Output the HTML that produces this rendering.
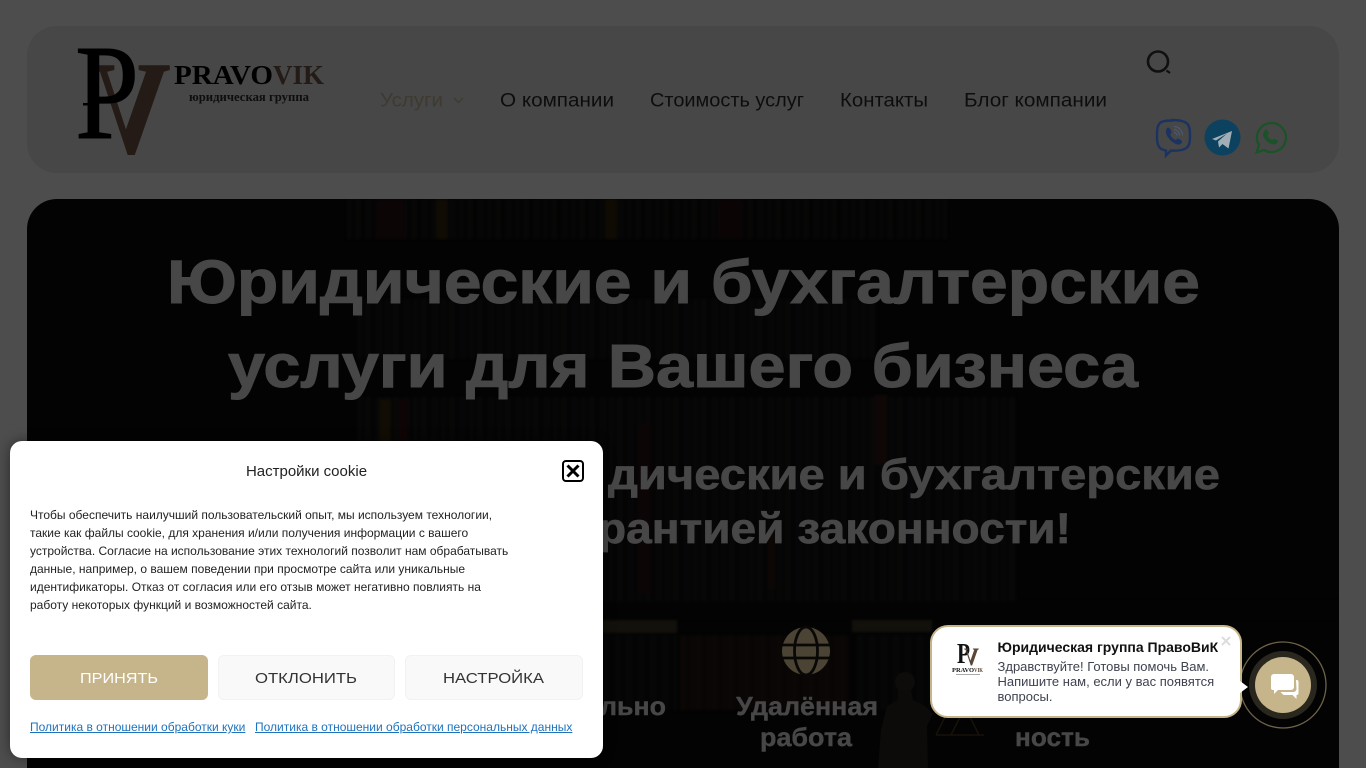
<!DOCTYPE html>
<html lang="ru"><head><meta charset="utf-8"><title>ПравоВиК</title>
<style>
html,body{margin:0;padding:0;width:1366px;height:768px;overflow:hidden;background:#4d4d4d}
body{position:relative;font-family:"Liberation Sans",sans-serif}
.abs{position:absolute}
#hdr{left:27px;top:26px;width:1312px;height:147px;border-radius:30px;background:#474747}
#hero{left:27px;top:199px;width:1312px;height:600px;border-radius:30px;background:#030303;overflow:hidden}
#hero div{position:absolute}
.spines{background:repeating-linear-gradient(90deg,#0b0b0c 0 5px,#050505 5px 8px,#0e0c0b 8px 14px,#040404 14px 18px,#0a0a0d 18px 25px,#060505 25px 28px)}
svg.top{position:absolute;left:0;top:0}
#modal{left:10px;top:441px;width:593px;height:317px;background:#fff;border-radius:12px;box-shadow:0 0 12px rgba(0,0,0,.45)}
#modal .t{position:absolute;left:0;top:20.500px;width:593px;text-align:center;font-size:15px;line-height:20px;color:#222}
#modal p{position:absolute;left:20px;top:65px;margin:0;width:490px;font-size:12px;line-height:18px;color:#222;white-space:nowrap}
.btn{position:absolute;top:214px;height:45px;border-radius:6px;box-sizing:border-box}
#modal a{position:absolute;top:278px;font-size:12px;line-height:16px;color:#1e73be;text-decoration:underline;white-space:nowrap}
#chat{left:930px;top:625px;width:312px;height:93px;box-sizing:border-box;background:#fff;border:2.500px solid #c6b58a;border-radius:18px}
#chat b{position:absolute;left:65.500px;top:11.500px;font-size:14px;line-height:16px;color:#111;white-space:nowrap}
#chat span{position:absolute;left:65.500px;top:31.500px;font-size:13px;line-height:15px;color:#3f4350;white-space:nowrap}
</style></head><body>
<div class="abs" id="hdr"></div>
<div class="abs" id="hero">
 <div style="left:0;top:0;width:1312px;height:600px;opacity:.5;filter:blur(1.2px)">
 <div class="spines" style="left:320px;top:0;width:600px;height:40px"></div>
 <div style="left:409px;top:0;width:12px;height:40px;background:#1f1505"></div>
 <div style="left:578px;top:0;width:12px;height:40px;background:#1d1404"></div>
 <div style="left:348px;top:0;width:30px;height:40px;background:#140808"></div>
 <div style="left:690px;top:0;width:25px;height:40px;background:#120708"></div>
 <div class="spines" style="left:330px;top:100px;width:520px;height:60px"></div>
 <div class="spines" style="left:330px;top:198px;width:660px;height:204px"></div>
 <div style="left:352px;top:200px;width:12px;height:50px;background:#1f1605"></div>
 <div style="left:372px;top:200px;width:8px;height:60px;background:#1c0608"></div>
 <div style="left:848px;top:196px;width:12px;height:70px;background:#1c0a0a"></div>
 <div style="left:740px;top:330px;width:8px;height:60px;background:#170a08"></div>
 <div style="left:610px;top:225px;width:14px;height:170px;background:#140808"></div>
 <div style="left:0;top:402px;width:1312px;height:18px;background:#040404"></div>
 <div style="left:570px;top:421px;width:80px;height:13px;background:#241f14"></div>
 <div style="left:825px;top:421px;width:80px;height:12px;background:#241f14"></div>
 <div style="left:653px;top:436px;width:170px;height:75px;background:repeating-linear-gradient(90deg,#120b07 0 6px,#0c0705 6px 10px,#0f0907 10px 16px)"></div>
 <div style="left:575px;top:436px;width:75px;height:75px;background:repeating-linear-gradient(90deg,#090a0c 0 6px,#050606 6px 12px)"></div>
 <div style="left:830px;top:436px;width:75px;height:75px;background:repeating-linear-gradient(90deg,#090a0c 0 6px,#050606 6px 12px)"></div>
 </div>
</div>
<svg class="top" width="1366" height="768" viewBox="0 0 1366 768" xmlns="http://www.w3.org/2000/svg">
 <!-- statue -->
 <circle cx="905" cy="682" r="10" fill="#0e0c0a"/>
 <path d="M898 690h13l2 10 12 6 8 8-6 12 1 42H878l3-38 6-24 11-6z" fill="#0d0b09"/>
 <path d="M936 735l9-18M960 717l-9 18M970 717l9 18M936 735h48" fill="none" stroke="#171309" stroke-width="1.500"/>
 <!-- logo -->
 <g font-family="'Liberation Serif',serif">
  <text transform="translate(171 153) scale(-1 1)" x="0" y="0" font-size="134" font-weight="bold" textLength="79" lengthAdjust="spacingAndGlyphs" fill="#241b17">V</text>
  <text x="75" y="138" font-size="136" textLength="64" lengthAdjust="spacingAndGlyphs" fill="#000" stroke="#000" stroke-width="1">P</text>
  <rect x="83" y="103" width="14" height="2.500" fill="#000"/>
  <g font-weight="bold">
  <text x="174" y="84" font-size="27" textLength="99" lengthAdjust="spacingAndGlyphs" fill="#000">PRAVO</text>
  <text x="273" y="84" font-size="27" textLength="51" lengthAdjust="spacingAndGlyphs" fill="#241b17">VIK</text>
  <text x="189" y="101" font-size="13" textLength="120" lengthAdjust="spacingAndGlyphs" fill="#0e0e0e">юридическая группа</text>
  </g>
 </g>
 <!-- nav -->
 <g font-size="19" fill="#0d0d0d">
  <text x="380" y="106.500" textLength="63" lengthAdjust="spacingAndGlyphs" fill="#3e3a30">Услуги</text>
  <path d="M454 98l4.500 4.500 4.500-4.500" fill="none" stroke="#3e3a30" stroke-width="1.300"/>
  <text x="500" y="106.500" textLength="114" lengthAdjust="spacingAndGlyphs">О компании</text>
  <text x="650" y="106.500" textLength="154" lengthAdjust="spacingAndGlyphs">Стоимость услуг</text>
  <text x="840" y="106.500" textLength="88" lengthAdjust="spacingAndGlyphs">Контакты</text>
  <text x="964" y="106.500" textLength="143" lengthAdjust="spacingAndGlyphs">Блог компании</text>
 </g>
 <!-- search -->
 <circle cx="1158" cy="61.500" r="10" fill="none" stroke="#101010" stroke-width="2.600"/>
 <path d="M1166.500 70.500l3.500 2.500" stroke="#101010" stroke-width="2.200"/>
 <!-- viber -->
 <path d="M1172 120.500c-5 0-10 .5-12 2.500-2.500 2.500-3 6-3 12.500s.5 10 3 12.500c1.500 1.500 3.500 2 6 2.500v5l5-5c7 .5 13-.5 16-3 2.500-2.500 3-6 3-12s-.5-9.500-3-12c-3-2.500-8-3.500-15-3.500z" fill="none" stroke="#1b3360" stroke-width="2.400"/>
 <path d="M1167 128c1.500-1 2.500 0 3.500 1.500l1 2c.5 1.500-1 2-1.300 3 1 2.500 3 4.500 5.500 5.500 1-.5 1.500-1.500 3-1.300l2.200 1.300c1.300 1 1.500 2 .7 3-1.200 1.500-3 2-5 1.200-4.500-1.700-8.500-5.700-10.300-10-.8-2.700-.2-4.500.7-6.200z" fill="#1b3360"/>
 <path d="M1174 126.500c4.500 0 8.500 4 8.500 9M1174 129.500c3 0 5.500 2.700 5.500 6M1174 132.500c1.500 0 3 1.500 3 3" fill="none" stroke="#4b5c7a" stroke-width="1"/>
 <!-- telegram -->
 <circle cx="1222.500" cy="137.500" r="18" fill="#0c4160"/>
 <path d="M1212 139l20-8-3.500 17.500-6-4.500-3.500 3.500-1-6 9-8-11 7z" fill="#a2aeb5"/>
 <!-- whatsapp -->
 <path d="M1256.500 152.500l2.500-7.500a14.500 14.500 0 1 1 5 5z" fill="none" stroke="#1a5327" stroke-width="2.200"/>
 <path d="M1265 130c1.200-.8 2-.4 2.500.4l1.300 2.600c.2.8-.8 1.700-1.300 2.600 1 2.200 2.700 3.600 4.800 4.500.8-.5 1.300-1.400 2.200-1.400l2.600 1.300c.9.5.9 1.300.4 2.200-.9 1.700-2.700 2.600-4.800 2.200-4.400-.9-8.700-5.200-9.600-9.100 0-2.200.9-4.300 1.900-5.300z" fill="#1a5327"/>
 <!-- hero text -->
 <g font-weight="bold" fill="#474747" stroke="#474747">
  <text x="167" y="303" font-size="61" stroke-width="1" textLength="1033" lengthAdjust="spacingAndGlyphs">Юридические и бухгалтерские</text>
  <text x="228" y="387" font-size="61" stroke-width="1" textLength="910" lengthAdjust="spacingAndGlyphs">услуги для Вашего бизнеса</text>
  <text x="608" y="489" font-size="43" stroke-width=".7" textLength="612" lengthAdjust="spacingAndGlyphs">дические и бухгалтерские</text>
  <text x="598" y="543" font-size="43" stroke-width=".7" textLength="473" lengthAdjust="spacingAndGlyphs">рантией законности!</text>
  <text x="600" y="715" font-size="26" stroke-width=".4" textLength="66" lengthAdjust="spacingAndGlyphs">льно</text>
  <text x="736" y="715" font-size="26" stroke-width=".4" textLength="142" lengthAdjust="spacingAndGlyphs">Удалённая</text>
  <text x="760" y="746" font-size="26" stroke-width=".4" textLength="92" lengthAdjust="spacingAndGlyphs">работа</text>
  <text x="1015" y="746" font-size="26" stroke-width=".4" textLength="75" lengthAdjust="spacingAndGlyphs">ность</text>
 </g>
 <!-- globe -->
 <circle cx="806" cy="651" r="24" fill="#4b4434"/>
 <ellipse cx="806" cy="651" rx="11.500" ry="24" fill="none" stroke="#0a0806" stroke-width="2.800"/>
 <path d="M782 645h48M782 658h48" stroke="#0a0806" stroke-width="2.800"/>
 <!-- chat button -->
 <circle cx="1283" cy="685" r="43" fill="none" stroke="#6e6349" stroke-width="1.300"/>
 <circle cx="1283" cy="685" r="34" fill="#2a271e"/>
 <circle cx="1283" cy="685" r="28" fill="#c6b58a"/>
 <path d="M1274 674h17a3 3 0 0 1 3 3v10a3 3 0 0 1-3 3h-13l-4 4v-4h-1a2 2 0 0 1-2-2v-11a3 3 0 0 1 3-3z" fill="#fff"/>
 <path d="M1296 680h.5a2 2 0 0 1 2 2v11a2 2 0 0 1-2 2v4l-4-4h-9l-3-3h13a3 3 0 0 0 3-3z" fill="#fff"/>
</svg>
<div class="abs" id="modal">
 <div class="t">Настройки cookie</div>
 <svg style="position:absolute;left:552px;top:19px" width="22" height="22" viewBox="0 0 22 22"><rect x="1" y="1" width="20" height="20" rx="3" fill="#fff" stroke="#000" stroke-width="2"/><path d="M5.500 5.500l11 11M16.500 5.500l-11 11" stroke="#000" stroke-width="3"/></svg>
 <p>Чтобы обеспечить наилучший пользовательский опыт, мы используем технологии,<br>такие как файлы cookie, для хранения и/или получения информации с вашего<br>устройства. Согласие на использование этих технологий позволит нам обрабатывать<br>данные, например, о вашем поведении при просмотре сайта или уникальные<br>идентификаторы. Отказ от согласия или его отзыв может негативно повлиять на<br>работу некоторых функций и возможностей сайта.</p>
 <div class="btn" style="left:20px;width:178px;background:#c6b58a"></div>
 <div class="btn" style="left:208px;width:177px;background:#f9f9f9;border:1px solid #f2f2f2"></div>
 <div class="btn" style="left:395px;width:178px;background:#f9f9f9;border:1px solid #f2f2f2"></div>
 <svg style="position:absolute;left:0;top:214px" width="593" height="45" font-size="15">
  <text x="70" y="28" textLength="78" lengthAdjust="spacingAndGlyphs" fill="#fff">ПРИНЯТЬ</text>
  <text x="245" y="28" textLength="102" lengthAdjust="spacingAndGlyphs" fill="#333">ОТКЛОНИТЬ</text>
  <text x="433" y="28" textLength="101" lengthAdjust="spacingAndGlyphs" fill="#333">НАСТРОЙКА</text>
 </svg>
 <a style="left:20px">Политика в отношении обработки куки</a>
 <a style="left:245px">Политика в отношении обработки персональных данных</a>
</div>
<div class="abs" id="chat">
 <svg style="position:absolute;left:19px;top:17px" width="34" height="32" viewBox="0 0 34 32" font-family="'Liberation Serif',serif" font-weight="bold">
  <text x="6" y="19" font-size="28" textLength="13" lengthAdjust="spacingAndGlyphs" fill="#111">P</text>
  <text transform="translate(28 21) scale(-1 1)" font-size="25" textLength="15" lengthAdjust="spacingAndGlyphs" fill="#5a4636">V</text>
  <text x="1" y="28" font-size="6" textLength="22" lengthAdjust="spacingAndGlyphs" fill="#111">PRAVO</text>
  <text x="23" y="28" font-size="6" textLength="9" lengthAdjust="spacingAndGlyphs" fill="#5a4636">VIK</text>
  <rect x="5" y="30" width="24" height="1" fill="#aaa"/>
 </svg>
 <b>Юридическая группа ПравоВиК</b>
 <span>Здравствуйте! Готовы помочь Вам.<br>Напишите нам, если у вас появятся<br>вопросы.</span>
 <svg style="position:absolute;left:288.500px;top:8.500px" width="10" height="10"><path d="M1 1l8 8M9 1l-8 8" stroke="#ddd" stroke-width="2"/></svg>
</div>
<svg class="top" width="1366" height="768" style="pointer-events:none"><path d="M1240 681l8 6-8 6z" fill="#fff"/></svg>
</body></html>
